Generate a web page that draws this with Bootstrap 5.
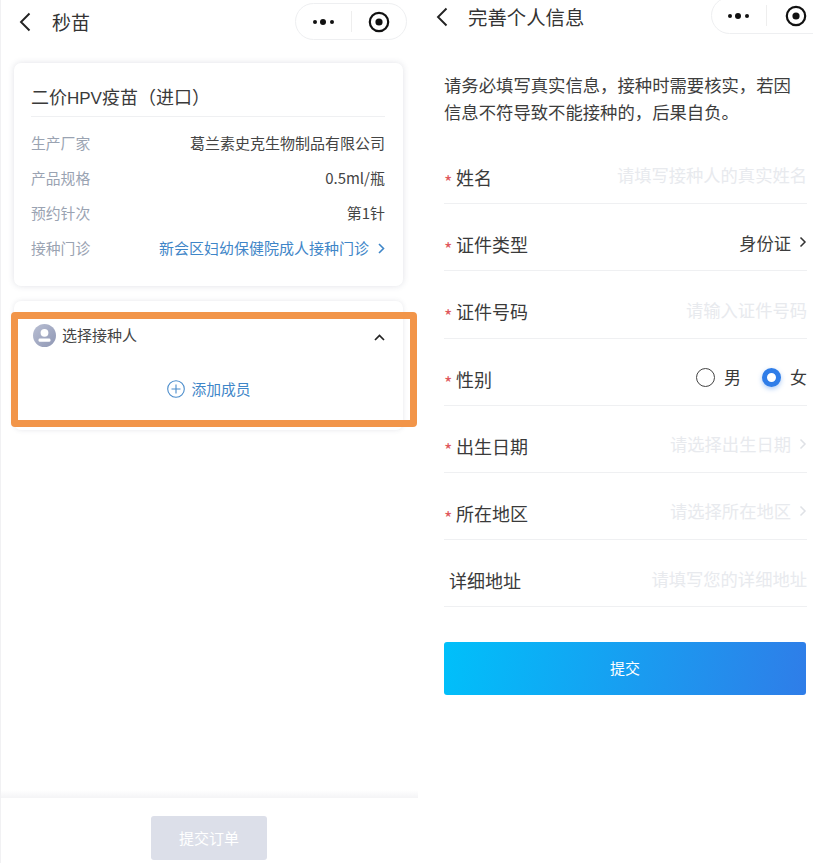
<!DOCTYPE html>
<html lang="zh">
<head>
<meta charset="utf-8">
<title>秒苗</title>
<link href="https://cdn.jsdelivr.net/npm/bootstrap@5.3.0/dist/css/bootstrap.min.css" rel="stylesheet">
<style>
html,body{height:863px;overflow:hidden;margin:0;background:#fff}
body{font-family:"Noto Sans CJK SC","Noto Sans",sans-serif;color:#333;width:813px}
.shot{height:863px}
.pane-l{width:418px;flex:none;position:relative;border-left:1px solid #f1f1f3;height:863px}
.pane-r{width:395px;flex:none;position:relative;height:863px}
.nav-l{height:43px;padding-left:18px}
.nav-title-l{font-size:19px;margin-left:21px;color:#333;line-height:1}
.capsule{position:absolute;display:flex;align-items:center;border:1px solid #eeeff1;border-radius:19px;background:#fff;height:37px}
.cap-l{left:294px;top:3px;width:112px}
.cap-r{left:293px;top:-3px;width:130px}
.cap-dots{width:55px;display:flex;justify-content:center}
.cap-r .cap-dots{width:54px}
.cap-sep{width:1px;height:21px;background:#eeeeee}
.cap-tgt{margin-left:16px;display:flex}
.cap-r .cap-tgt{margin-left:18px}
.panel-box{margin:20px 15px 0 13px;height:223px;background:#fff;border-radius:7px;box-shadow:0 0 6px rgba(60,70,100,.16);padding:0 18px 0 17px}
.panel-title{height:54px;font-size:18px;color:#3a3a3a;border-bottom:1px solid #eff0f2;display:flex;align-items:flex-end;padding-bottom:6px;line-height:1.3}
.latin-part{font-family:"Liberation Sans",sans-serif;font-size:17px}
.info-list{padding-top:8.5px}
.info-row{height:35px;font-size:15px;display:flex;justify-content:space-between;align-items:center}
.info-key{color:#9aa3b2;font-size:14.8px}
.info-val{color:#444}
.info-link{color:#3f86c8}
.info-link .chev{margin-left:9px}
.pick-box{margin:15px 15px 0 13px;height:129px;background:#fff;border-radius:7px;box-shadow:0 0 5px rgba(60,70,100,.13);padding:22px 18px 0 19px;position:relative}
.pick-head{font-size:15px;color:#444;height:24px}
.pick-name{margin-left:6px}
.pick-add{color:#3f86c8;font-size:14.8px;margin-top:31px}
.plus-ic{margin-right:6px}
.hl-frame{position:absolute;left:11px;top:312px;width:406px;height:115px;border:7px solid #f29549;border-radius:4px;pointer-events:none}
.foot-shade{position:absolute;left:0;right:0;top:790px;height:8px;background:linear-gradient(#fff,#f4f4f6)}
.foot-btn{position:absolute;left:150px;top:816px;width:116px;height:44px;border-radius:3px;background:#dcdfe9;color:#fff;font-size:15px;display:flex;align-items:center;justify-content:center;border:0;padding:0}
.nav-r{height:36px;padding-left:18px;padding-bottom:2px}
.nav-title-r{font-size:19.4px;margin-left:20px;color:#333;line-height:1}
.form-wrap{padding:0 6px 0 26px}
.notice{font-size:17.35px;line-height:27px;color:#3d3d3d;margin:35px 0 0;height:66px;white-space:nowrap}
.f-row{height:67.2px;border-bottom:1px solid #eff0f2;display:flex;align-items:center;justify-content:space-between;padding-top:14px}
.f-label{font-size:18px;color:#3a3a3a;display:flex;align-items:center;line-height:1}
.req{width:12px;color:#e0585d;font-size:18px;line-height:1;flex:none;padding-top:7px}
.plain-label{padding-left:5px}
.f-hint{font-size:17.3px;color:#e8eaee;line-height:1;display:flex;align-items:center;margin-top:-4px}
.f-val{font-size:17.3px;color:#3d3d3d;line-height:1;display:flex;align-items:center;margin-top:-4px}
.chev{margin-left:8px;flex:none}
.radio-set{margin-top:-3px}
.radio-off,.radio-on{width:19px;height:19px;border-radius:50%;display:inline-block;flex:none}
.radio-off{border:1.5px solid #444}
.radio-on{background:#fff;border:5.5px solid #2f7de8;box-shadow:0 2px 5px rgba(47,125,232,.4)}
.radio-txt{font-size:17px;color:#3a3a3a;margin-left:9px}
.radio-gap{margin-left:21px}
.send-btn{display:block;width:362px;height:53px;border:0;padding:0 0 2px;margin-top:35px;border-radius:3px;background:linear-gradient(100deg,#00c0fa,#2f7de8);color:#fff;font-size:15px}
</style>
</head>
<body>
<div class="shot d-flex">
  <section class="pane-l">
    <header class="nav-l d-flex align-items-center">
      <svg width="12" height="20" viewBox="0 0 12 20" fill="none" stroke="#222" stroke-width="1.9"><path d="M10.5 1.5 2 10l8.5 8.5"/></svg>
      <span class="nav-title-l">秒苗</span>
    </header>
    <div class="capsule cap-l">
      <span class="cap-dots"><svg width="24" height="8" viewBox="0 0 24 8" fill="#111"><circle cx="3" cy="4" r="2"/><circle cx="11" cy="4" r="3"/><circle cx="20" cy="4" r="2"/></svg></span>
      <span class="cap-sep"></span>
      <span class="cap-tgt"><svg width="22" height="22" viewBox="0 0 22 22" fill="none"><circle cx="11" cy="11" r="9.2" stroke="#111" stroke-width="2.2"/><circle cx="11" cy="11" r="3.6" fill="#111"/></svg></span>
    </div>
    <div class="panel-box">
      <div class="panel-title"><span>二价<span class="latin-part">HPV</span>疫苗（进口）</span></div>
      <div class="info-list">
        <div class="info-row"><span class="info-key">生产厂家</span><span class="info-val">葛兰素史克生物制品有限公司</span></div>
        <div class="info-row"><span class="info-key">产品规格</span><span class="info-val">0.5ml/瓶</span></div>
        <div class="info-row"><span class="info-key">预约针次</span><span class="info-val">第1针</span></div>
        <div class="info-row"><span class="info-key">接种门诊</span><span class="info-link d-flex align-items-center">新会区妇幼保健院成人接种门诊<svg class="chev" width="7" height="11" viewBox="0 0 7 11" fill="none" stroke="#3f86c8" stroke-width="1.6"><path d="M1 1l4.5 4.5L1 10"/></svg></span></div>
      </div>
    </div>
    <div class="pick-box">
      <div class="pick-head d-flex align-items-center justify-content-between">
        <span class="d-flex align-items-center">
          <svg width="23" height="23" viewBox="0 0 23 23"><defs><linearGradient id="av" x1="0" y1="0" x2="1" y2="1"><stop offset="0" stop-color="#b9bfd3"/><stop offset="1" stop-color="#8f97b4"/></linearGradient></defs><circle cx="11.5" cy="11.5" r="11.5" fill="url(#av)"/><circle cx="11.5" cy="8.8" r="3.9" fill="#fff"/><rect x="5.5" y="14.6" width="12" height="3.2" rx="1.4" fill="#fff"/></svg>
          <span class="pick-name">选择接种人</span>
        </span>
        <svg class="mt-1" width="11" height="7" viewBox="0 0 11 7" fill="none" stroke="#222" stroke-width="1.7"><path d="M1 6l4.5-4.5L10 6"/></svg>
      </div>
      <div class="pick-add d-flex align-items-center justify-content-center">
        <svg class="plus-ic" width="18" height="18" viewBox="0 0 18 18" fill="none" stroke="#4a8ccb" stroke-width="1.1"><circle cx="9" cy="9" r="8.3"/><path d="M9 4.5v9M4.5 9h9"/></svg>
        <span>添加成员</span>
      </div>
    </div>
    <div class="foot-shade"></div>
    <button type="button" class="foot-btn">提交订单</button>
  </section>
  <section class="pane-r">
    <header class="nav-r d-flex align-items-center">
      <svg width="12" height="20" viewBox="0 0 12 20" fill="none" stroke="#222" stroke-width="1.9"><path d="M10.5 1.5 2 10l8.5 8.5"/></svg>
      <span class="nav-title-r">完善个人信息</span>
    </header>
    <div class="capsule cap-r">
      <span class="cap-dots"><svg width="24" height="8" viewBox="0 0 24 8" fill="#111"><circle cx="3" cy="4" r="2"/><circle cx="11" cy="4" r="3"/><circle cx="20" cy="4" r="2"/></svg></span>
      <span class="cap-sep"></span>
      <span class="cap-tgt"><svg width="22" height="22" viewBox="0 0 22 22" fill="none"><circle cx="11" cy="11" r="9.2" stroke="#111" stroke-width="2.2"/><circle cx="11" cy="11" r="3.6" fill="#111"/></svg></span>
    </div>
    <div class="form-wrap">
      <p class="notice">请务必填写真实信息，接种时需要核实，若因<br>信息不符导致不能接种的，后果自负。</p>
      <div class="f-row"><span class="f-label"><span class="req">*</span>姓名</span><span class="f-hint">请填写接种人的真实姓名</span></div>
      <div class="f-row"><span class="f-label"><span class="req">*</span>证件类型</span><span class="f-val">身份证<svg class="chev" width="8" height="12" viewBox="0 0 8 12" fill="none" stroke="#333" stroke-width="1.5"><path d="M1.5 1.5 6 6l-4.5 4.5"/></svg></span></div>
      <div class="f-row"><span class="f-label"><span class="req">*</span>证件号码</span><span class="f-hint">请输入证件号码</span></div>
      <div class="f-row"><span class="f-label"><span class="req">*</span>性别</span><span class="radio-set d-flex align-items-center"><span class="radio-off"></span><span class="radio-txt">男</span><span class="radio-on radio-gap"></span><span class="radio-txt">女</span></span></div>
      <div class="f-row"><span class="f-label"><span class="req">*</span>出生日期</span><span class="f-hint">请选择出生日期<svg class="chev" width="8" height="12" viewBox="0 0 8 12" fill="none" stroke="#dfe1e6" stroke-width="1.5"><path d="M1.5 1.5 6 6l-4.5 4.5"/></svg></span></div>
      <div class="f-row"><span class="f-label"><span class="req">*</span>所在地区</span><span class="f-hint">请选择所在地区<svg class="chev" width="8" height="12" viewBox="0 0 8 12" fill="none" stroke="#dfe1e6" stroke-width="1.5"><path d="M1.5 1.5 6 6l-4.5 4.5"/></svg></span></div>
      <div class="f-row"><span class="f-label plain-label">详细地址</span><span class="f-hint">请填写您的详细地址</span></div>
      <button type="button" class="send-btn">提交</button>
    </div>
  </section>
</div>
<div class="hl-frame"></div>
<script src="https://cdn.jsdelivr.net/npm/bootstrap@5.3.0/dist/js/bootstrap.bundle.min.js"></script>
</body>
</html>
